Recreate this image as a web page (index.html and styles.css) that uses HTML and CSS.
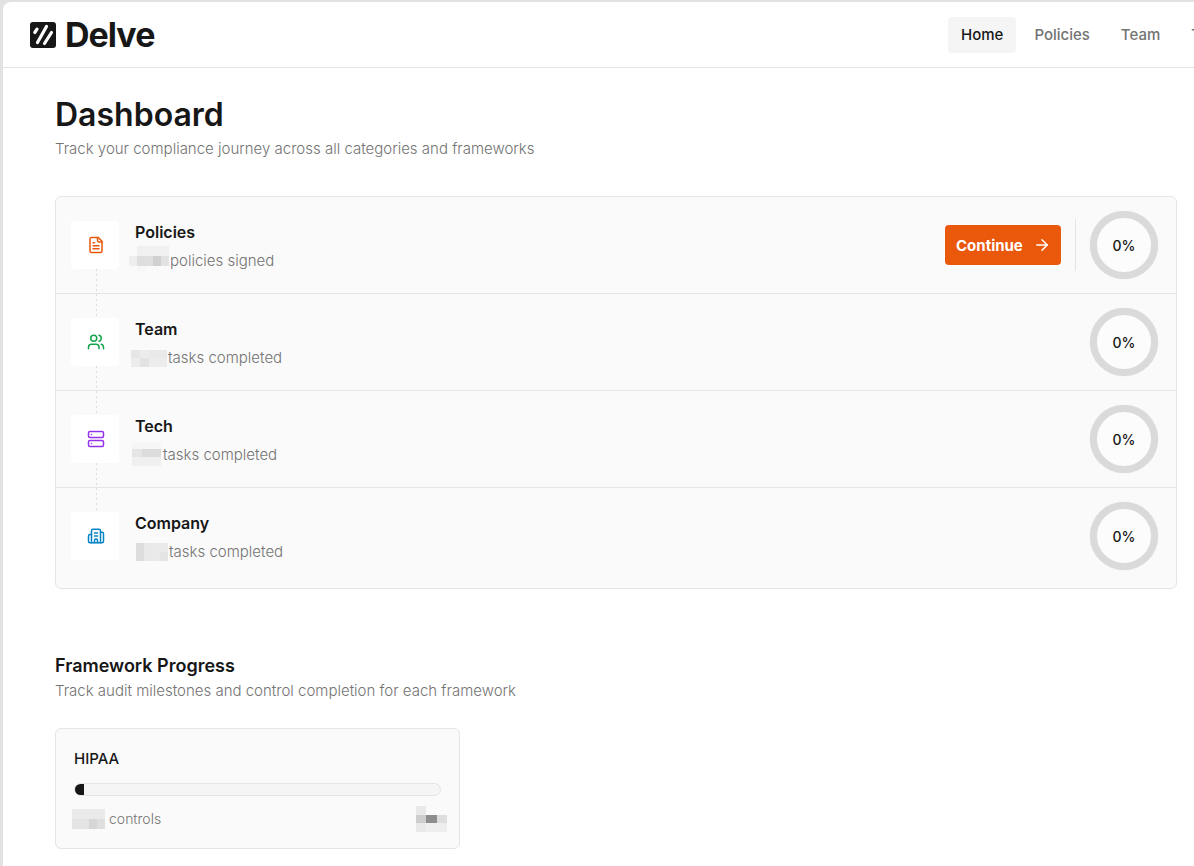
FILE: index.html
```
<!DOCTYPE html>
<html lang="en">
<head>
  <meta charset="UTF-8" />
  <meta name="viewport" content="width=device-width, initial-scale=1.0" />
  <title>Delve - Dashboard</title>
  <link rel="stylesheet" href="styles.css">
</head>
<body>
  <div class="app">
    <header class="topbar">
      <a class="logo" href="#">
        <svg viewBox="0 0 26 26" width="26" height="26" aria-hidden="true">
          <rect width="26" height="26" rx="3" fill="#171717"/>
          <g stroke="#fff" stroke-width="3.2" stroke-linecap="round">
            <line x1="4.8" y1="10.5" x2="7" y2="7.2"/>
            <line x1="7.5" y1="20.5" x2="16.5" y2="4.500"/>
            <line x1="14.5" y1="21.5" x2="21.5" y2="10.5"/>
          </g>
        </svg>
        <span>Delve</span>
      </a>
      <nav class="nav">
        <a class="nav-link active" href="#">Home</a>
        <a class="nav-link" href="#">Policies</a>
        <a class="nav-link" href="#">Team</a>
        <a class="nav-link" href="#">Tech</a>
      </nav>
    </header>

    <main class="content">
      <h1>Dashboard</h1>
      <p class="subtitle">Track your compliance journey across all categories and frameworks</p>

      <section class="categories">
        <div class="row">
          <div class="tile orange">
            <svg class="icon" viewBox="0 0 24 24">
              <path d="M15 2H6a2 2 0 0 0-2 2v16a2 2 0 0 0 2 2h12a2 2 0 0 0 2-2V7Z"/>
              <path d="M14 2v4a2 2 0 0 0 2 2h4"/>
              <path d="M10 9H8"/><path d="M16 13H8"/><path d="M16 17H8"/>
            </svg>
          </div>
          <div class="info">
            <h2>Policies</h2>
            <p class="status">
              <svg class="redacted" width="40" height="30" viewBox="0 0 40 30">
                <rect x="8" y="0" width="32" height="10" fill="#f0f0f0"/>
                <rect x="0" y="10" width="8" height="10" fill="#eeeeee"/>
                <rect x="8" y="10" width="16" height="10" fill="#dedede"/>
                <rect x="24" y="10" width="8" height="10" fill="#d0d0d0"/>
                <rect x="32" y="10" width="8" height="10" fill="#e2e2e2"/>
                <rect x="8" y="20" width="8" height="6" fill="#f7f7f7"/>
              </svg>
              policies signed
            </p>
          </div>
          <button class="continue" type="button">
            Continue
            <svg class="icon" viewBox="0 0 24 24"><path d="M5 12h14"/><path d="m12 5 7 7-7 7"/></svg>
          </button>
          <div class="divider"></div>
          <div class="ring">0%</div>
        </div>

        <div class="row">
          <div class="tile green">
            <svg class="icon" viewBox="0 0 24 24">
              <path d="M16 21v-2a4 4 0 0 0-4-4H6a4 4 0 0 0-4 4v2"/>
              <circle cx="9" cy="7" r="4"/>
              <path d="M22 21v-2a4 4 0 0 0-3-3.870"/>
              <path d="M16 3.130a4 4 0 0 1 0 7.750"/>
            </svg>
          </div>
          <div class="info">
            <h2>Team</h2>
            <p class="status">
              <svg class="redacted" width="38" height="30" viewBox="0 0 38 30">
                <rect x="2" y="7" width="36" height="17" fill="#ececec"/>
                <rect x="2" y="7" width="9" height="8" fill="#e6e6e6"/>
                <rect x="11" y="15" width="9" height="9" fill="#e2e2e2"/>
                <rect x="20" y="7" width="18" height="8" fill="#e9e9e9"/>
              </svg>
              tasks completed
            </p>
          </div>
          <div class="ring">0%</div>
        </div>

        <div class="row">
          <div class="tile purple">
            <svg class="icon" viewBox="0 0 24 24">
              <rect x="2" y="2" width="20" height="8" rx="2"/>
              <rect x="2" y="14" width="20" height="8" rx="2"/>
              <path d="M6 6h.01"/><path d="M6 18h.01"/>
            </svg>
          </div>
          <div class="info">
            <h2>Tech</h2>
            <p class="status">
              <svg class="redacted" width="33" height="30" viewBox="0 0 33 30">
                <rect x="3" y="2" width="29" height="24" fill="#f6f6f6"/>
                <rect x="3" y="9" width="10" height="8" fill="#e6e6e6"/>
                <rect x="13" y="9" width="19" height="8" fill="#dcdcdc"/>
                <rect x="3" y="17" width="29" height="9" fill="#f0f0f0"/>
              </svg>
              tasks completed
            </p>
          </div>
          <div class="ring">0%</div>
        </div>

        <div class="row">
          <div class="tile blue">
            <svg class="icon" viewBox="0 0 24 24">
              <path d="M10 12h4"/><path d="M10 8h4"/>
              <path d="M14 21v-3a2 2 0 0 0-4 0v3"/>
              <path d="M6 10H4a2 2 0 0 0-2 2v7a2 2 0 0 0 2 2h16a2 2 0 0 0 2-2V9a2 2 0 0 0-2-2h-2"/>
              <path d="M6 21V5a2 2 0 0 1 2-2h8a2 2 0 0 1 2 2v16"/>
            </svg>
          </div>
          <div class="info">
            <h2>Company</h2>
            <p class="status">
              <svg class="redacted" width="39" height="30" viewBox="0 0 39 30">
                <rect x="7" y="6" width="32" height="18" fill="#eaeaea"/>
                <rect x="7" y="6" width="8" height="18" fill="#dddddd"/>
                <rect x="15" y="6" width="8" height="18" fill="#e9e9e9"/>
                <rect x="31" y="15" width="8" height="9" fill="#e4e4e4"/>
              </svg>
              tasks completed
            </p>
          </div>
          <div class="ring">0%</div>
        </div>
      </section>

      <h2 class="section-title">Framework Progress</h2>
      <p class="subtitle">Track audit milestones and control completion for each framework</p>

      <section class="framework">
        <h3>HIPAA</h3>
        <div class="bar" role="progressbar" aria-label="HIPAA" aria-valuenow="2.5" aria-valuemin="0" aria-valuemax="100">
          <div class="bar-fill" style="width: 2.5%"></div>
        </div>
        <div class="framework-foot">
          <p class="status">
            <svg class="redacted" width="33" height="20" viewBox="0 0 33 20">
              <rect width="33" height="20" fill="#eaeaea"/>
              <rect y="10" width="17" height="10" fill="#e4e4e4"/>
              <rect x="17" y="10" width="8" height="10" fill="#d6d6d6"/>
              <rect x="25" y="10" width="8" height="10" fill="#dfdfdf"/>
            </svg>
            controls
          </p>
          <svg class="redacted" width="31" height="26" viewBox="0 0 31 26">
            <rect width="10" height="26" fill="#e9e9e9"/>
            <rect x="10" y="17" width="21" height="9" fill="#eeeeee"/>
            <rect y="9" width="10" height="8" fill="#cecece"/>
            <rect x="10" y="9" width="11" height="8" fill="#8e8e8e"/>
            <rect x="21" y="9" width="10" height="8" fill="#dedede"/>
          </svg>
        </div>
      </section>
    </main>
  </div>
</body>
</html>
```
FILE: styles.css
```
* {
  box-sizing: border-box;
}

body {
  margin: 0;
  padding: 2px 0 0 3px;
  background: #e2e2e2;
  color: #171717;
  font-family: Inter, "Liberation Sans", sans-serif;
  font-size: 15px;
}

h1, h2, h3, p {
  margin: 0;
}

.app {
  min-height: calc(100vh - 2px);
  background: #fff;
  border-top-left-radius: 8px;
  overflow: hidden;
}

/* header */
.topbar {
  display: flex;
  align-items: center;
  justify-content: space-between;
  height: 66px;
  padding-left: 27px;
  border-bottom: 1px solid #e5e5e5;
}

.logo {
  display: flex;
  align-items: center;
  gap: 9px;
  color: #171717;
  font-size: 34px;
  font-weight: 700;
  line-height: 40px;
  letter-spacing: -1px;
  text-decoration: none;
}

.nav {
  display: flex;
  gap: 5px;
  width: 246px;
  overflow: hidden;
}

.nav-link {
  flex: none;
  padding: 0 13px;
  border-radius: 4px;
  color: #737373;
  font-weight: 500;
  line-height: 36px;
  text-decoration: none;
}

.nav-link.active {
  background: #f5f5f5;
  color: #171717;
}

/* page */
.content {
  padding: 26px 17px 17px 52px;
}

h1 {
  font-size: 32px;
  font-weight: 600;
  line-height: 42px;
}

.subtitle {
  color: #737373;
  font-weight: 300;
  line-height: 26px;
}

.categories {
  margin-top: 34px;
  padding-bottom: 3px;
  background: #fafafa;
  border: 1px solid #e5e5e5;
  border-radius: 6px;
}

.row {
  display: flex;
  align-items: center;
  gap: 14px;
  height: 97px;
  padding: 0 18px 0 15px;
  border-bottom: 1px solid #e5e5e5;
}

.row:last-child {
  border-bottom-color: transparent;
}

.tile {
  position: relative;
  display: flex;
  align-items: center;
  justify-content: center;
  width: 48px;
  height: 48px;
  padding-left: 1px;
  background: #fff;
  border-radius: 4px;
}

/* dashed line down to the next tile */
.row:not(:last-child) .tile::after {
  content: "";
  position: absolute;
  top: 48px;
  left: 25px;
  width: 1px;
  height: 49px;
  background: repeating-linear-gradient(#dcdcdc 0 2px, transparent 2px 5px);
}

.icon {
  width: 18px;
  height: 18px;
  fill: none;
  stroke: currentColor;
  stroke-width: 2;
  stroke-linecap: round;
  stroke-linejoin: round;
}

.orange { color: #ea580c; }
.green { color: #16a34a; }
.purple { color: #9333ea; }
.blue { color: #0284c7; }

.info {
  flex: 1;
  padding: 3px 0 0 2px;
}

.info h2 {
  font-size: 16px;
  font-weight: 600;
  line-height: 28px;
}

.status {
  display: flex;
  align-items: center;
  gap: 1px;
  color: #737373;
  font-weight: 300;
  line-height: 30px;
}

.info .status {
  margin-left: -6px;
}

.redacted {
  flex: none;
}

.continue {
  display: flex;
  align-items: center;
  justify-content: space-between;
  width: 116px;
  height: 40px;
  padding: 0 10px 0 11px;
  border: 0;
  border-radius: 4px;
  background: #ea580c;
  color: #fff;
  font: inherit;
  font-weight: 700;
}

.divider {
  width: 1px;
  height: 52px;
  background: #e5e5e5;
}

.ring {
  display: flex;
  align-items: center;
  justify-content: center;
  width: 68px;
  height: 68px;
  border: 7px solid #dadada;
  border-radius: 50%;
  background: #fcfcfc;
  box-shadow: 0 0 1px #dadada;
  font-size: 14px;
  font-weight: 500;
}

.section-title {
  margin-top: 64px;
  font-size: 18px;
  font-weight: 600;
  line-height: 26px;
}

.section-title + .subtitle {
  line-height: 24px;
}

.framework {
  width: 405px;
  max-width: 100%;
  margin-top: 25px;
  padding: 18px;
  background: #fafafa;
  border: 1px solid #e5e5e5;
  border-radius: 6px;
}

.framework h3 {
  font-size: 15px;
  font-weight: 500;
  line-height: 24px;
}

.bar {
  height: 13px;
  margin-top: 12px;
  border: 1px solid #e5e5e5;
  border-radius: 7px;
  background: #f5f5f5;
  overflow: hidden;
}

.bar-fill {
  height: 100%;
  background: #171717;
}

.framework-foot {
  display: flex;
  align-items: center;
  justify-content: space-between;
  margin: 8px -6px -4px -2px;
  font-size: 14px;
}

.framework-foot .status {
  gap: 4px;
}
```
